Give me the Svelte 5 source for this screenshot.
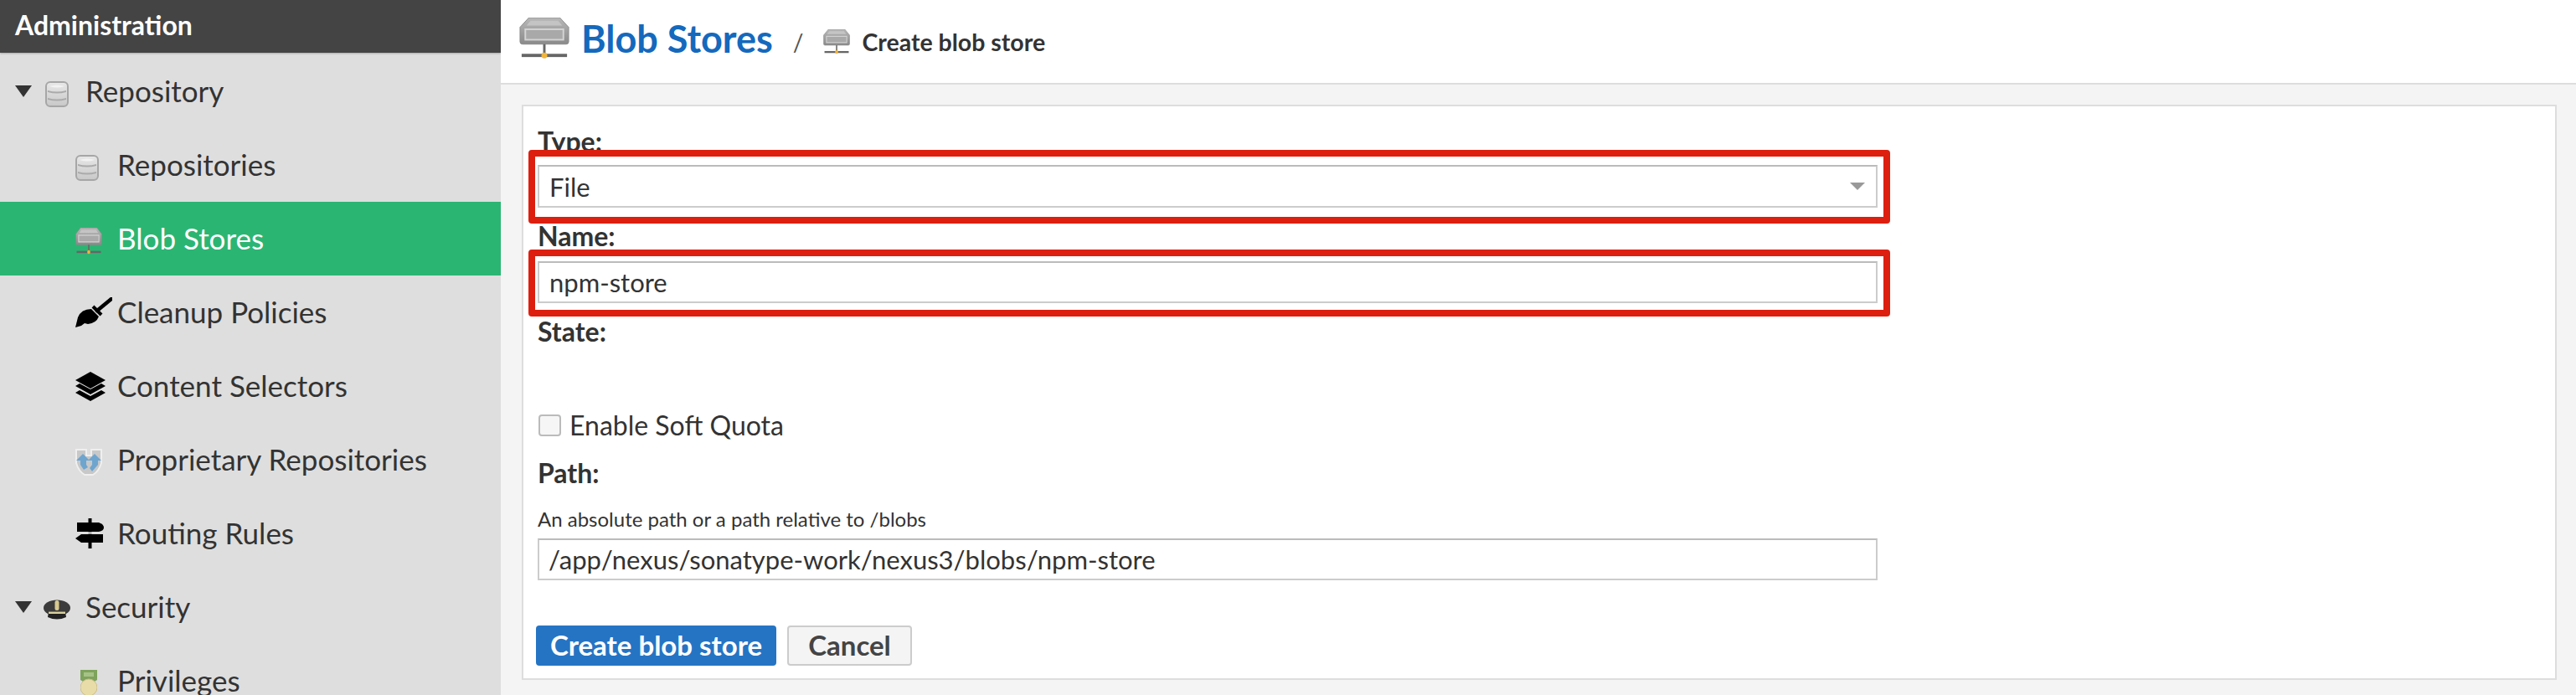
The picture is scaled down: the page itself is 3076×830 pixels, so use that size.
<script>
	const rows = [
		{ label: 'Repository', icon: 'db', group: true },
		{ label: 'Repositories', icon: 'db' },
		{ label: 'Blob Stores', icon: 'store', active: true },
		{ label: 'Cleanup Policies', icon: 'broom' },
		{ label: 'Content Selectors', icon: 'layers' },
		{ label: 'Proprietary Repositories', icon: 'cups' },
		{ label: 'Routing Rules', icon: 'sign' },
		{ label: 'Security', icon: 'hat', group: true },
		{ label: 'Privileges', icon: 'medal' }
	];
</script>

{#snippet store(w, h)}
	<svg width={w} height={h} viewBox="0 0 62 52" preserveAspectRatio="none">
		<path d="M12 0H50L61 12V30Q61 33 58 33H4Q1 33 1 30V12Z" fill="url(#store-body)" stroke="#8a8a8a" />
		<path d="M14 4H48L53 10H9Z" fill="#c4c4c4" />
		<rect x="7.5" y="14.5" width="47" height="13" fill="#a9a9a9" stroke="#d4d4d4" stroke-width="2" />
		<rect x="29.5" y="33" width="3" height="12" fill="#666" />
		<rect x="3" y="45" width="56" height="4" fill="#666" />
		<circle cx="31" cy="47" r="3.6" fill="#f0b53a" />
	</svg>
{/snippet}

{#snippet icon(name)}
	{#if name === 'db'}
		<svg width="28" height="31" viewBox="0 0 28 31">
			<rect x="1" y="1" width="26" height="29" rx="5" fill="url(#db-body)" stroke="#a6a6a6" stroke-width="2" />
			<path d="M3 11Q14 14 25 11V13Q14 16 3 13ZM3 20Q14 23 25 20V22Q14 25 3 22Z" fill="#aaa" />
			<path d="M5 6Q14 3 23 6Q14 9 5 6Z" fill="#f2f2f2" />
		</svg>
	{:else if name === 'store'}
		{@render store(32, 32)}
	{:else if name === 'broom'}
		<svg width="44" height="36" viewBox="0 0 44 36">
			<path d="M43 2L26 16" stroke="#000" stroke-width="4.5" stroke-linecap="round" />
			<path d="M21 11L31 21" stroke="#000" stroke-width="4" />
			<path d="M0 36L3 24Q7 14 19 14L28 23Q25 31 15 32L11 31L7 34Z" fill="#000" />
		</svg>
	{:else if name === 'layers'}
		<svg width="36" height="35" viewBox="0 0 36 35">
			<path d="M18 0L36 10L18 20L0 10Z" fill="#000" />
			<path d="M5 14L18 21L31 14L36 17L18 27L0 17Z" fill="#000" />
			<path d="M5 22L18 29L31 22L36 25L18 35L0 25Z" fill="#000" />
		</svg>
	{:else if name === 'cups'}
		<svg width="32" height="32" viewBox="0 0 32 32">
			<path d="M1 1H13V8H19V1H31V17Q28 27 21 31H11Q4 27 1 17Z" fill="#c8c8c8" stroke="#efefef" stroke-width="2" />
			<path d="M9 6L17 14H13V19L15 22L10 25L6 19V14H1Z" fill="#6ea5cf" />
			<path d="M23 6L31 14H27V19L20 27L17 23L20 19V14H15Z" fill="#6ea5cf" />
		</svg>
	{:else if name === 'sign'}
		<svg width="35" height="36" viewBox="0 0 35 36">
			<rect x="15.5" y="0" width="4" height="36" fill="#000" />
			<path d="M2 5H28Q34 7 34 11Q34 15 28 16H2Z" fill="#000" />
			<path d="M33 19H7L0 24L7 29H33Z" fill="#000" />
			<rect x="0" y="16.4" width="35" height="2.2" fill="#dedede" />
		</svg>
	{:else if name === 'hat'}
		<svg width="32" height="26" viewBox="0 0 32 26">
			<ellipse cx="16" cy="11" rx="16" ry="9.5" fill="#3b3b3b" />
			<path d="M6 15H26L27 22Q16 27 5 22Z" fill="#222" />
			<rect x="13.5" y="2" width="5" height="12" rx="2.5" fill="#d8c98f" />
			<rect x="6" y="15.5" width="20" height="2.5" fill="#d8cf9f" />
		</svg>
	{:else if name === 'medal'}
		<svg width="20" height="36" viewBox="0 0 20 36">
			<path d="M0 0H20V12L15 15H5L0 12Z" fill="#7ea35c" />
			<rect x="4" y="3" width="12" height="5" fill="#a6c287" />
			<circle cx="10" cy="21" r="10" fill="#e8dca8" stroke="#cdbf8a" />
		</svg>
	{/if}
{/snippet}

<svg class="defs" width="0" height="0" aria-hidden="true">
	<defs>
		<linearGradient id="store-body" x1="0" y1="0" x2="0" y2="1">
			<stop offset="0" stop-color="#b8b8b8" />
			<stop offset="1" stop-color="#8a8a8a" />
		</linearGradient>
		<linearGradient id="db-body" x1="0" y1="0" x2="0" y2="1">
			<stop offset="0" stop-color="#e8e8e8" />
			<stop offset="1" stop-color="#c8c8c8" />
		</linearGradient>
	</defs>
</svg>

<div class="page">
	<aside class="sidebar">
		<div class="side-title">Administration</div>
		<nav>
			{#each rows as row}
				<div class="row" class:group={row.group} class:active={row.active}>
					{#if row.group}<span class="tri"></span>{/if}
					<span class="icon {row.icon}">{@render icon(row.icon)}</span>
					<span class="text">{row.label}</span>
				</div>
			{/each}
		</nav>
	</aside>

	<main>
		<header>
			<span class="big-icon">{@render store(60, 50)}</span>
			<h1>Blob Stores</h1>
			<span class="slash">/</span>
			<span class="small-icon">{@render store(32, 30)}</span>
			<span class="crumb">Create blob store</span>
		</header>

		<div class="content">
			<form class="panel">
				<div class="label type-label">Type:</div>
				<div class="marked">
					<div class="control">
						<span>File</span>
						<span class="arrow"></span>
					</div>
				</div>

				<div class="label name-label">Name:</div>
				<div class="marked name-mark">
					<input class="control" value="npm-store" readonly />
				</div>

				<div class="label state-label">State:</div>

				<div class="check-row">
					<span class="check"></span>
					<span class="check-text">Enable Soft Quota</span>
				</div>

				<div class="label path-label">Path:</div>
				<div class="help">An absolute path or a path relative to /blobs</div>
				<input class="control path" value="/app/nexus/sonatype-work/nexus3/blobs/npm-store" readonly />

				<div class="buttons">
					<button type="button" class="primary">Create blob store</button>
					<button type="button" class="cancel">Cancel</button>
				</div>
			</form>
		</div>
	</main>
</div>

<style>
	:global(body) {
		margin: 0;
		background: #f4f4f4;
	}

	.defs {
		display: block;
		height: 0;
	}

	.page {
		display: flex;
		height: 830px;
		overflow: hidden;
		font-family: Lato, 'Liberation Sans', sans-serif;
		color: #333;
	}

	.sidebar {
		flex: 0 0 598px;
		background: #dedede;
	}

	.side-title {
		height: 63px;
		padding-left: 18px;
		background: #444;
		color: #fff;
		font-size: 32px;
		font-weight: 700;
		line-height: 60px;
		box-shadow: 0 1px 2px rgba(0, 0, 0, 0.25);
	}

	nav {
		padding-top: 2px;
	}

	.row {
		display: flex;
		align-items: center;
		height: 88px;
		padding-left: 90px;
		font-size: 35px;
	}

	.row.group {
		padding-left: 18px;
	}

	.row.active {
		background: #2bb573;
		color: #fff;
	}

	.text {
		padding-bottom: 2px;
	}

	.tri {
		flex: none;
		width: 0;
		height: 0;
		margin-right: 14px;
		border-left: 10px solid transparent;
		border-right: 10px solid transparent;
		border-top: 14px solid #333;
	}

	.icon {
		display: flex;
		flex: none;
		justify-content: flex-start;
		box-sizing: border-box;
		width: 32px;
		margin-right: 18px;
	}

	.icon svg {
		flex: none;
		display: block;
	}

	.group .icon {
		justify-content: center;
	}

	/* icons sit a little below the row centre */
	.icon.db,
	.icon.store,
	.icon.cups {
		padding-top: 6px;
	}

	.icon.hat {
		padding-top: 5px;
	}

	.icon.medal {
		padding: 10px 0 0 6px;
	}

	main {
		display: flex;
		flex: 1;
		flex-direction: column;
		min-width: 0;
	}

	header {
		display: flex;
		align-items: center;
		height: 99px;
		padding-left: 22px;
		background: #fff;
		border-bottom: 2px solid #ddd;
	}

	.big-icon {
		display: flex;
		margin-right: 14px;
		padding-bottom: 7px;
	}

	h1 {
		margin: 0;
		padding-bottom: 8px;
		color: #1469bd;
		font-size: 45px;
		font-weight: 700;
	}

	.slash {
		margin: 0 24px 0 24px;
		font-size: 28px;
		color: #555;
	}

	.small-icon {
		display: flex;
		margin-right: 14px;
	}

	.crumb {
		font-size: 28.5px;
		font-weight: 700;
	}

	.content {
		flex: 1;
		padding: 24px 23px 18px 25px;
	}

	.panel {
		box-sizing: border-box;
		height: 687px;
		padding: 26px 17px 0;
		background: #fff;
		border: 2px solid #ddd;
		font-size: 32px;
	}

	.label {
		height: 34px;
		font-size: 32px;
		font-weight: 700;
		line-height: 32px;
	}

	.type-label {
		margin-bottom: 10px;
	}

	.name-label {
		margin: 18px 0 12px;
	}

	.state-label {
		margin: 18px 0 81px;
	}

	.path-label {
		margin-top: 28px;
	}

	.marked {
		position: relative;
		width: 1600px;
	}

	/* red annotation boxes drawn over the form */
	.marked::after {
		content: '';
		position: absolute;
		inset: -18px -15px -19px -11px;
		border: 8px solid #dd1f10;
		border-radius: 4px;
		pointer-events: none;
	}

	.name-mark::after {
		inset: -14px -15px -16px -11px;
	}

	.control {
		display: flex;
		align-items: center;
		justify-content: space-between;
		box-sizing: border-box;
		width: 1600px;
		height: 51px;
		padding: 0 13px 0 12px;
		background: #fff;
		border: 2px solid #ccc;
		border-top-color: #bbb;
		color: #333;
		font-family: inherit;
		font-size: 31px;
		outline: none;
	}

	input.control {
		display: block;
		height: 50px;
	}

	input.path {
		padding-left: 11px;
	}

	.arrow {
		width: 0;
		height: 0;
		border-left: 9px solid transparent;
		border-right: 9px solid transparent;
		border-top: 9px solid #999;
	}

	.check-row {
		display: flex;
		align-items: center;
		gap: 10px;
		height: 26px;
	}

	.check-text {
		padding-bottom: 2px;
	}

	.check {
		box-sizing: border-box;
		width: 27px;
		height: 26px;
		margin-left: 1px;
		background: #f6f6f6;
		border: 2px solid #bbb;
		border-radius: 4px;
	}

	.help {
		height: 24px;
		margin: 25px 0 11px;
		font-size: 24px;
		line-height: 24px;
	}

	.buttons {
		display: flex;
		gap: 13px;
		margin: 54px 0 0 -2px;
	}

	button {
		box-sizing: border-box;
		height: 48px;
		padding: 0 0 3px;
		border-radius: 4px;
		font-family: inherit;
		font-size: 33px;
		font-weight: 700;
	}

	.primary {
		width: 287px;
		background: #2574c4;
		border: none;
		color: #fff;
	}

	.cancel {
		width: 149px;
		background: #f4f4f4;
		border: 2px solid #ccc;
		color: #444;
	}
</style>
